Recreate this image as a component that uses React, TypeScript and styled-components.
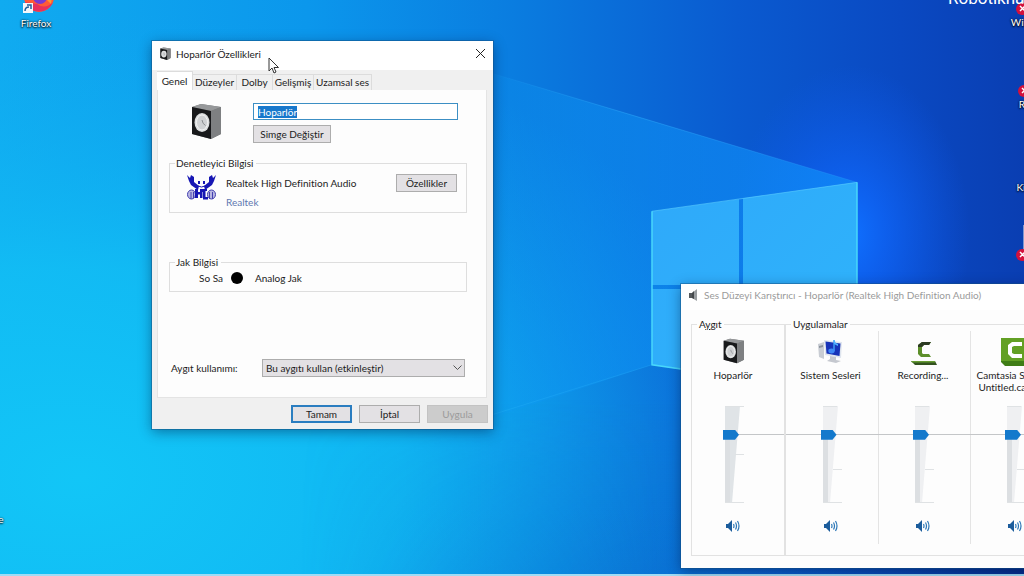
import React from 'react';
import styled, { createGlobalStyle } from 'styled-components';

const GlobalStyle = createGlobalStyle`
  *, *::before, *::after { box-sizing: border-box; }
  html, body { margin: 0; height: 100%; }
  #root { height: 100%; }
  body, button, input, select {
    font-family: Lato, 'Open Sans', 'Liberation Sans', sans-serif;
    font-size: 10px;
    line-height: 14px;
    font-variant-ligatures: none;
    color: #1c1c1c;
  }
`;

/* ---------- Desktop ---------- */

const Desktop = styled.main`
  position: relative;
  width: 100%;
  min-height: 100vh;
  overflow: hidden;
  background: #0c8fe8;
`;

const WallpaperSvg = styled.svg`
  position: absolute;
  inset: 0;
  width: 100%;
  height: 100%;
  border-bottom: 2px solid #9fdcf5;
`;

const Shortcut = styled.a<{ $x: number; $y: number }>`
  position: absolute;
  left: ${(p) => p.$x}px;
  top: ${(p) => p.$y}px;
  width: 60px;
  display: flex;
  flex-direction: column;
  align-items: center;
  color: #fff;
  text-decoration: none;
  text-shadow: 0 1px 2px #000, 0 0 2px #000;
`;

const ShortcutIcon = styled.svg`
  width: 40px;
  height: 36px;
  overflow: visible;
`;

const Watermark = styled.div`
  position: absolute;
  left: 948px;
  top: -13px;
  font: 400 17px/22px Roboto, sans-serif;
  color: #fff;
  white-space: nowrap;
`;

const Pointer = styled.svg`
  position: absolute;
  left: 268px;
  top: 57px;
  width: 12px;
  height: 18px;
`;

/* ---------- Windows ---------- */

const Window = styled.section<{ $x: number; $y: number; $w: number; $fill: string }>`
  position: absolute;
  left: ${(p) => p.$x}px;
  top: ${(p) => p.$y}px;
  width: ${(p) => p.$w}px;
  background: ${(p) => p.$fill};
  box-shadow: 0 0 0 1px rgba(20, 80, 130, 0.45), 0 3px 12px rgba(0, 20, 60, 0.45);
`;

const TitleBar = styled.header<{ $muted?: boolean }>`
  display: flex;
  align-items: center;
  gap: 5px;
  height: ${(p) => (p.$muted ? 26 : 29)}px;
  padding: 0 7px 4px 8px;
  background: #fff;
  color: ${(p) => (p.$muted ? '#9a9a9a' : '#1c1c1c')};
`;

const Title = styled.h1`
  flex: 1;
  margin: 0;
  font-size: 10px;
  font-weight: 400;
  white-space: nowrap;
`;

const CloseButton = styled.button`
  display: grid;
  place-items: center;
  width: 12px;
  height: 14px;
  padding: 0;
  border: 0;
  background: none;
`;

const Button = styled.button<{ $primary?: boolean; $w: number }>`
  width: ${(p) => p.$w}px;
  height: 18px;
  padding: 0;
  line-height: 14px;
  border: ${(p) => (p.$primary ? '2px solid #2a7dc0' : '1px solid #adadad')};
  background: #e3e1e4;
  &:disabled {
    color: #9b9b9b;
    background: #cccccc;
    border-color: #c3c3c3;
  }
`;

const Tabs = styled.nav`
  display: flex;
  align-items: flex-end;
  padding: 1px 5px 0;
`;

const Tab = styled.button<{ $active?: boolean; $w: number }>`
  width: ${(p) => p.$w}px;
  height: ${(p) => (p.$active ? 19 : 16)}px;
  padding: 0 0 1px;
  white-space: nowrap;
  border: 1px solid #dcdcdc;
  border-width: 1px 1px 0 0;
  background: ${(p) => (p.$active ? '#fff' : '#f0f0f0')};
`;

const Page = styled.div`
  margin: 0 6px 0 5px;
  padding: 13px 19px 20px 11px;
  background: #fdfdfd;
  border: 1px solid #e4e4e4;
  border-top: 0;
`;

const Identity = styled.div`
  display: flex;
  gap: 31px;
  padding-left: 22px;
`;

const IdentityFields = styled.div`
  flex: 1;
  display: flex;
  flex-direction: column;
  align-items: flex-start;
  gap: 5px;
  padding-right: 9px;
`;

const NameInput = styled.input`
  width: 100%;
  height: 17px;
  padding: 0 4px;
  border: 1px solid #3c8fc4;
  background: #fff;
  outline: none;
  &::selection {
    color: #fff;
    background: #1778cc;
  }
`;

const Group = styled.fieldset<{ $top: number }>`
  min-width: 0;
  margin: ${(p) => p.$top}px 0 0;
  padding: 0 9px 0 17px;
  border: 1px solid #dedede;
`;

const Legend = styled.legend`
  margin-left: -12px;
  padding: 0 3px 0 1px;
  height: 14px;
`;

const Controller = styled.div`
  display: flex;
  align-items: flex-start;
  gap: 10px;
  padding: 4px 0 3px;
`;

const ControllerText = styled.div`
  flex: 1;
  display: flex;
  flex-direction: column;
  gap: 5px;
  padding-top: 2px;
  white-space: nowrap;
`;

const VendorLink = styled.a`
  color: #5d78b0;
  text-decoration: none;
`;

const Jack = styled.div`
  display: flex;
  align-items: center;
  gap: 8px;
  height: 22px;
  padding: 0 0 4px 12px;
`;

const JackDot = styled.i`
  width: 12px;
  height: 12px;
  margin-right: 4px;
  border-radius: 50%;
  background: #000;
`;

const Usage = styled.div`
  display: flex;
  align-items: center;
  justify-content: space-between;
  margin-top: 67px;
  padding: 0 2px;
`;

const SelectBox = styled.div`
  position: relative;
  width: 203px;
`;

const Select = styled.select`
  display: block;
  appearance: none;
  width: 100%;
  height: 18px;
  padding: 0 18px 0 3px;
  border: 1px solid #adadad;
  border-radius: 0;
  background: #e3e1e4;
`;

const SelectArrow = styled.svg`
  position: absolute;
  right: 3px;
  top: 6px;
  width: 9px;
  height: 6px;
  pointer-events: none;
`;

const Footer = styled.footer`
  display: flex;
  justify-content: flex-end;
  gap: 7px;
  padding: 7px 5px 6px;
`;

/* ---------- Mixer ---------- */

const MixerBody = styled.div`
  display: flex;
  padding: 7px 10px 12px;
`;

const MixerGroup = styled.fieldset<{ $grow?: boolean }>`
  display: flex;
  flex: ${(p) => (p.$grow ? '1' : '0 0 94px')};
  min-width: 0;
  margin: 0;
  padding: 0 0 11px;
  border: 1px solid #e2e2e2;
  & + & { border-left-width: 2px; margin-left: -1px; }
`;

const MixerLegend = styled.legend`
  height: 14px;
  margin-left: 5px;
  padding: 0 2px;
`;

const Channel = styled.div<{ $first?: boolean }>`
  flex: 0 0 92px;
  display: flex;
  flex-direction: column;
  align-items: center;
  padding: 6px ${(p) => (p.$first ? 10 : 3)}px 10px 0;
  & + & { border-left: 1px solid #e4e4e4; }
`;

const ChannelIcon = styled.svg`
  width: 30px;
  height: 30px;
`;

const ChannelName = styled.label`
  height: 38px;
  padding-top: 2px;
  line-height: 12px;
  text-align: center;
  white-space: pre;
`;

const SliderArea = styled.div<{ $first?: boolean }>`
  position: relative;
  align-self: stretch;
  display: flex;
  justify-content: center;
  height: 100px;
  &::before {
    content: '';
    position: absolute;
    top: 29px;
    right: -10px;
    left: ${(p) => (p.$first ? '50%' : '0')};
    height: 1px;
    background: #c4c6c8;
  }
`;

const Wedge = styled.svg`
  position: absolute;
  top: 0;
  left: 50%;
  width: 20px;
  height: 99px;
  margin-left: -8px;
`;

const Slider = styled.input`
  position: relative;
  appearance: none;
  writing-mode: vertical-lr;
  direction: rtl;
  width: 16px;
  height: 98px;
  margin: 0 4px 0 0;
  background: none;
  &::-webkit-slider-thumb {
    appearance: none;
    width: 16px;
    height: 10px;
    background: #1479cc;
    clip-path: polygon(0 0, 75% 0, 100% 50%, 75% 100%, 0 100%);
  }
`;

const MuteButton = styled.button`
  margin-top: 13px;
  width: 16px;
  height: 16px;
  padding: 0;
  border: 0;
  background: none;
  svg { display: block; width: 16px; height: 16px; }
`;

/* ---------- Drawings ---------- */

const Wallpaper = () => (
  <WallpaperSvg viewBox="0 0 1024 576" preserveAspectRatio="none" aria-hidden="true">
    <defs>
      <linearGradient id="sky" x1="0" y1="0" x2="1" y2="0">
        <stop offset="0" stopColor="#10abf0" />
        <stop offset=".3" stopColor="#0b97ec" />
        <stop offset=".5" stopColor="#0a7de0" />
        <stop offset=".72" stopColor="#0a5ad0" />
        <stop offset=".88" stopColor="#0a49c2" />
        <stop offset="1" stopColor="#0a3eb2" />
      </linearGradient>
      <radialGradient id="cyan" gradientUnits="userSpaceOnUse" cx="0" cy="0" r="1" gradientTransform="translate(80 480) scale(720 470)">
        <stop offset="0" stopColor="#12c6f7" />
        <stop offset=".45" stopColor="#12c0f5" stopOpacity=".8" />
        <stop offset="1" stopColor="#10a8f0" stopOpacity="0" />
      </radialGradient>
      <radialGradient id="glow" gradientUnits="userSpaceOnUse" cx="0" cy="0" r="1" gradientTransform="translate(850 235) scale(120 170)">
        <stop offset="0" stopColor="#0f70ff" />
        <stop offset=".3" stopColor="#0f66fa" stopOpacity=".75" />
        <stop offset="1" stopColor="#0f5cf0" stopOpacity="0" />
      </radialGradient>
      <linearGradient id="beam" gradientUnits="userSpaceOnUse" x1="430" y1="0" x2="857" y2="0">
        <stop offset="0" stopColor="#0f9df5" stopOpacity="0" />
        <stop offset=".35" stopColor="#0d96f4" stopOpacity=".45" />
        <stop offset="1" stopColor="#1085f6" stopOpacity=".85" />
      </linearGradient>
      <linearGradient id="edge" gradientUnits="userSpaceOnUse" x1="480" y1="0" x2="857" y2="0">
        <stop offset="0" stopColor="#35b4ff" stopOpacity="0" />
        <stop offset=".4" stopColor="#35b4ff" stopOpacity=".4" />
        <stop offset="1" stopColor="#35a4ff" stopOpacity=".2" />
      </linearGradient>
      <linearGradient id="floor" gradientUnits="userSpaceOnUse" x1="0" y1="400" x2="0" y2="576">
        <stop offset="0" stopColor="#0670cc" stopOpacity="0" />
        <stop offset="1" stopColor="#0668c4" stopOpacity=".35" />
      </linearGradient>
      <linearGradient id="floorFade" gradientUnits="userSpaceOnUse" x1="300" y1="0" x2="1024" y2="0">
        <stop offset="0" stopColor="#000" />
        <stop offset=".5" stopColor="#fff" />
      </linearGradient>
      <mask id="floorMask"><rect x="300" y="350" width="724" height="226" fill="url(#floorFade)" /></mask>
      <linearGradient id="glass" x1="0" y1="0" x2="1" y2="1">
        <stop offset="0" stopColor="#2fa9fa" />
        <stop offset="1" stopColor="#2fb4fb" />
      </linearGradient>
      <linearGradient id="corner" gradientUnits="userSpaceOnUse" x1="780" y1="0" x2="1024" y2="0">
        <stop offset="0" stopColor="#0640ac" stopOpacity="0" />
        <stop offset="1" stopColor="#052c8c" />
      </linearGradient>
    </defs>
    <rect width="1024" height="576" fill="url(#sky)" />
    <rect width="1024" height="576" fill="url(#cyan)" />
    <rect width="1024" height="576" fill="url(#glow)" />
    <path d="M857 183 430 55V440L652 366 857 400Z" fill="url(#beam)" />
    <path d="M857 183 480 70" stroke="url(#edge)" strokeWidth="1" />
    <path d="M300 350H1024V576H300Z" fill="url(#floor)" mask="url(#floorMask)" />
    <path d="M780 560H1024V576H780Z" fill="url(#corner)" />
    <path d="M652 212 739 200V286H652Z M743 199 857 183V300H743Z M652 290H739V380L652 366Z" fill="url(#glass)" />
    <path d="M652 212 857 183" stroke="#5cd0ff" strokeOpacity=".6" />
    <path d="M652 212V366L700 373 M857 183V300" fill="none" stroke="#48d8fb" strokeWidth="1.5" />
    <path d="M652 366 480 420" stroke="#3ac0ff" strokeOpacity=".2" />
  </WallpaperSvg>
);

const SpeakerShape = () => (
  <>
    <path d="M1 4 10 1 30 4V31L20 36 1 31Z" fill="#77797b" />
    <path d="M1 4 10 1 30 4 20 8Z" fill="#96989a" />
    <path d="M20 8 30 4V31L20 36Z" fill="#7e8082" />
    <path d="M1 4 20 8V36L1 31Z" fill="#18191b" />
    <ellipse cx="11" cy="19.500" rx="7.500" ry="9.500" fill="#dcdedf" />
    <ellipse cx="11" cy="19.500" rx="5.500" ry="7.500" fill="#cfd1d3" stroke="#f3f3f3" />
    <path d="M11 17Q11.500 21 14.500 22.500" fill="none" stroke="#8a8d90" />
  </>
);

const Crab = () => (
  <svg width="29" height="28" viewBox="0 0 29 28" aria-hidden="true">
    <path d="M0 1 3 4 4 1 7 3 7 8 12 12 11 16 4 11 2 7Z M29 1 26 4 25 1 22 3 22 8 17 12 18 16 25 11 27 7Z" fill="#1717b4" />
    <path d="M11 7H13V10H11Z M16 7H18V10H16Z" fill="#1717b4" />
    <path d="M11 12Q14.500 14 18 12" fill="none" stroke="#1717b4" />
    <g fill="#b9b7e2" stroke="#4441b0">
      <ellipse cx="4.500" cy="20.500" rx="4" ry="4.500" />
      <ellipse cx="24.500" cy="20.500" rx="4" ry="4.500" />
      <path d="M4 18V25M6.500 18V24M22.500 18V25M25.500 18V25" />
    </g>
    <path d="M8 15H11V18H13V15H20V17H18.500V23H21V25.500H16V18H15.500V24H13V20.500H11V24H8Z" fill="#1717b4" />
  </svg>
);

const SystemSounds = () => (
  <>
    <path d="M2 7 8 5V22L3 20Z" fill="#c9cdd4" />
    <path d="M3 9 7 8V10L3 11Z" fill="#8b929c" />
    <path d="M8 3 26 5 25 21 9 18Z" fill="#dfe5ee" />
    <path d="M9.500 4.500 24.500 6.500 23.500 19 10.500 16.500Z" fill="#1733b8" />
    <path d="M18 3V14" stroke="#3f9cf5" strokeWidth="1.500" />
    <path d="M18 3Q19 6 22 7V9L18 7Z" fill="#4fb2ff" />
    <ellipse cx="15.500" cy="14" rx="3.200" ry="2.400" fill="#3f88f5" />
    <path d="M14 19 20 20V23L25 24 20 26 11 24 14 22Z" fill="#c5c8cf" />
  </>
);

const Recorder = () => (
  <>
    <path d="M23 5H14L10 8V17L13 20H23L21 17H15L14 16V10L16 8H21Z" fill="#5d8f2a" />
    <path d="M23 5H14L10 8V10H14L16 8H21Z" fill="#2c3b22" />
    <path d="M3 24H27L29 28H7Z" fill="#33521f" />
    <path d="M3 24H27V25.500H4Z" fill="#659b32" />
  </>
);

const Camtasia = () => (
  <>
    <path d="M1 1H29V29H5L1 25Z" fill="#3f7d16" />
    <path d="M1 1H29V24H1Z" fill="#62a024" />
    <path d="M22 5H12L8 8V17L12 21H22V17H14L12 16V10L14 9H22Z" fill="#fff" />
  </>
);

const Volume = () => (
  <svg viewBox="0 0 16 16" aria-hidden="true">
    <path d="M1 6H3L7 2V14L3 10H1Z" fill="#1b5c9c" />
    <path d="M8.500 6Q9.500 8 8.500 10 M10.500 4.500Q12.500 8 10.500 11.500 M12.500 3Q15.500 8 12.500 13" fill="none" stroke="#2d78b8" strokeWidth="1.200" />
  </svg>
);

const ErrorBadge = ({ y }: { y: number }) => (
  <g transform={`translate(22 ${y})`}>
    <circle r="6" fill="#d3103c" />
    <path d="M-2-3 3 2M3-3-2 2" stroke="#fff" strokeWidth="1.500" />
  </g>
);

const DocumentIcon = ({ badge }: { badge: boolean }) => (
  <ShortcutIcon viewBox="0 0 40 36" aria-hidden="true">
    <path d="M23 0H40V26H23Z" fill="#7f97d0" />
    {badge && <ErrorBadge y={30} />}
  </ShortcutIcon>
);

/* ---------- Content ---------- */

const channels = [
  { id: 'system', name: 'Sistem Sesleri', icon: <SystemSounds />, mark: 64 },
  { id: 'recorder', name: 'Recording...', icon: <Recorder />, mark: 64 },
  { id: 'camtasia', name: 'Camtasia Studio -\nUntitled.camproj', icon: <Camtasia />, mark: 64 },
];

type ChannelProps = { id: string; name: string; icon: React.ReactNode; mark: number; first?: boolean };

const MixerChannel = ({ id, name, icon, mark, first }: ChannelProps) => (
  <Channel $first={first}>
    <ChannelIcon viewBox="0 0 30 30" aria-hidden="true">{icon}</ChannelIcon>
    <ChannelName htmlFor={id}>{name}</ChannelName>
    <SliderArea $first={first}>
      <Wedge viewBox="0 0 20 99" aria-hidden="true">
        <path d="M0 1H15L7 98H0Z" fill={first ? '#e0e4e7' : '#eff0f2'} />
        <path d="M0 30H5V98H0Z" fill="#dcdfe2" />
        <path d={`M0 1.500H${first ? 19 : 14}M10 ${mark}.500H19M0 97.500H19`} stroke="#dfe2e4" />
      </Wedge>
      <Slider id={id} type="range" min={0} max={100} defaultValue={72} />
    </SliderArea>
    <MuteButton aria-label={`${name} sesini kapat`}><Volume /></MuteButton>
  </Channel>
);

const PropertiesDialog = () => (
  <Window $x={152} $y={41} $w={341} $fill="#f0f0f0">
    <TitleBar>
      <svg width="11" height="13" viewBox="0 0 31 36" aria-hidden="true"><SpeakerShape /></svg>
      <Title>Hoparlör Özellikleri</Title>
      <CloseButton aria-label="Kapat">
        <svg width="9" height="9" viewBox="0 0 9 9"><path d="M0 0 9 9M9 0 0 9" stroke="#222" /></svg>
      </CloseButton>
    </TitleBar>
    <Tabs>
      <Tab $active $w={36}>Genel</Tab>
      <Tab $w={44}>Düzeyler</Tab>
      <Tab $w={36}>Dolby</Tab>
      <Tab $w={41}>Gelişmiş</Tab>
      <Tab $w={58}>Uzamsal ses</Tab>
    </Tabs>
    <Page>
      <Identity>
        <svg width="31" height="36" viewBox="0 0 31 36" aria-hidden="true"><SpeakerShape /></svg>
        <IdentityFields>
          <NameInput
            aria-label="Aygıt adı"
            defaultValue="Hoparlör"
            autoFocus
            onFocus={(e) => e.currentTarget.select()}
          />
          <Button $w={78}>Simge Değiştir</Button>
        </IdentityFields>
      </Identity>
      <Group $top={13}>
        <Legend>Denetleyici Bilgisi</Legend>
        <Controller>
          <Crab />
          <ControllerText>
            <span>Realtek High Definition Audio</span>
            <VendorLink href="#realtek">Realtek</VendorLink>
          </ControllerText>
          <Button $w={61}>Özellikler</Button>
        </Controller>
      </Group>
      <Group $top={42}>
        <Legend>Jak Bilgisi</Legend>
        <Jack>
          <span>So Sa</span>
          <JackDot />
          <span>Analog Jak</span>
        </Jack>
      </Group>
      <Usage>
        <label htmlFor="usage">Aygıt kullanımı:</label>
        <SelectBox>
          <Select id="usage">
            <option>Bu aygıtı kullan (etkinleştir)</option>
          </Select>
          <SelectArrow viewBox="0 0 9 6"><path d="M.5.500 4.500 4.500 8.500.500" fill="none" stroke="#555" /></SelectArrow>
        </SelectBox>
      </Usage>
    </Page>
    <Footer>
      <Button $w={61} $primary>Tamam</Button>
      <Button $w={61}>İptal</Button>
      <Button $w={61} disabled>Uygula</Button>
    </Footer>
  </Window>
);

const MixerWindow = () => (
  <Window $x={681} $y={284} $w={400} $fill="#fdfdfd">
    <TitleBar $muted>
      <svg width="10" height="12" viewBox="0 0 10 12" aria-hidden="true">
        <path d="M0 4H3V9H0Z" fill="#55595c" />
        <path d="M3 4 8 0V12L3 9Z" fill="#9a9ea1" />
        <path d="M3 4 5 2V10L3 9Z" fill="#44484b" />
      </svg>
      <Title>Ses Düzeyi Karıştırıcı - Hoparlör (Realtek High Definition Audio)</Title>
    </TitleBar>
    <MixerBody>
      <MixerGroup>
        <MixerLegend>A<u>y</u>gıt</MixerLegend>
        <MixerChannel
          id="speaker"
          name="Hoparlör"
          mark={49}
          first
          icon={<g transform="translate(5 1) scale(.7)"><SpeakerShape /></g>}
        />
      </MixerGroup>
      <MixerGroup $grow>
        <MixerLegend>Uygulamalar</MixerLegend>
        {channels.map((c) => <MixerChannel key={c.id} {...c} />)}
      </MixerGroup>
    </MixerBody>
  </Window>
);

export default function App() {
  return (
    <>
      <GlobalStyle />
      <Desktop>
        <Wallpaper />
        <Shortcut href="#firefox" $x={6} $y={-20}>
          <ShortcutIcon viewBox="0 0 40 36" aria-hidden="true">
            <circle cx="23" cy="17" r="15" fill="#ff5a36" />
            <path d="M9 22A15 15 0 0 0 37 22Q29 30 21 24Z" fill="#e8305c" />
            <circle cx="24" cy="17" r="7" fill="#7a3ad0" />
            <path d="M31 8Q37 14 35 24L31 20Z" fill="#ff9a2e" />
            <path d="M7 23H17V33H7Z" fill="#f4f7fa" />
            <path d="M9 31Q9 27 13 27M11 25H15V29" fill="none" stroke="#1f5f9c" strokeWidth="1.500" />
          </ShortcutIcon>
          Firefox
        </Shortcut>
        <Shortcut href="#document" $x={-29} $y={512}>e</Shortcut>
        <Shortcut href="#windows" $x={990} $y={-21}><DocumentIcon badge />Win</Shortcut>
        <Shortcut href="#recycle" $x={992} $y={61}><DocumentIcon badge />R</Shortcut>
        <Shortcut href="#camera" $x={991} $y={144}><DocumentIcon badge={false} />Ki</Shortcut>
        <Shortcut href="#errors" $x={990} $y={225}><DocumentIcon badge /></Shortcut>
        <Watermark>Robotikha</Watermark>
        <PropertiesDialog />
        <MixerWindow />
        <Pointer viewBox="0 0 12 18" aria-hidden="true">
          <path d="M1 1V14L4 11 6 16 8 15 6 10.500H10.500Z" fill="#fff" stroke="#333" />
        </Pointer>
      </Desktop>
    </>
  );
}
